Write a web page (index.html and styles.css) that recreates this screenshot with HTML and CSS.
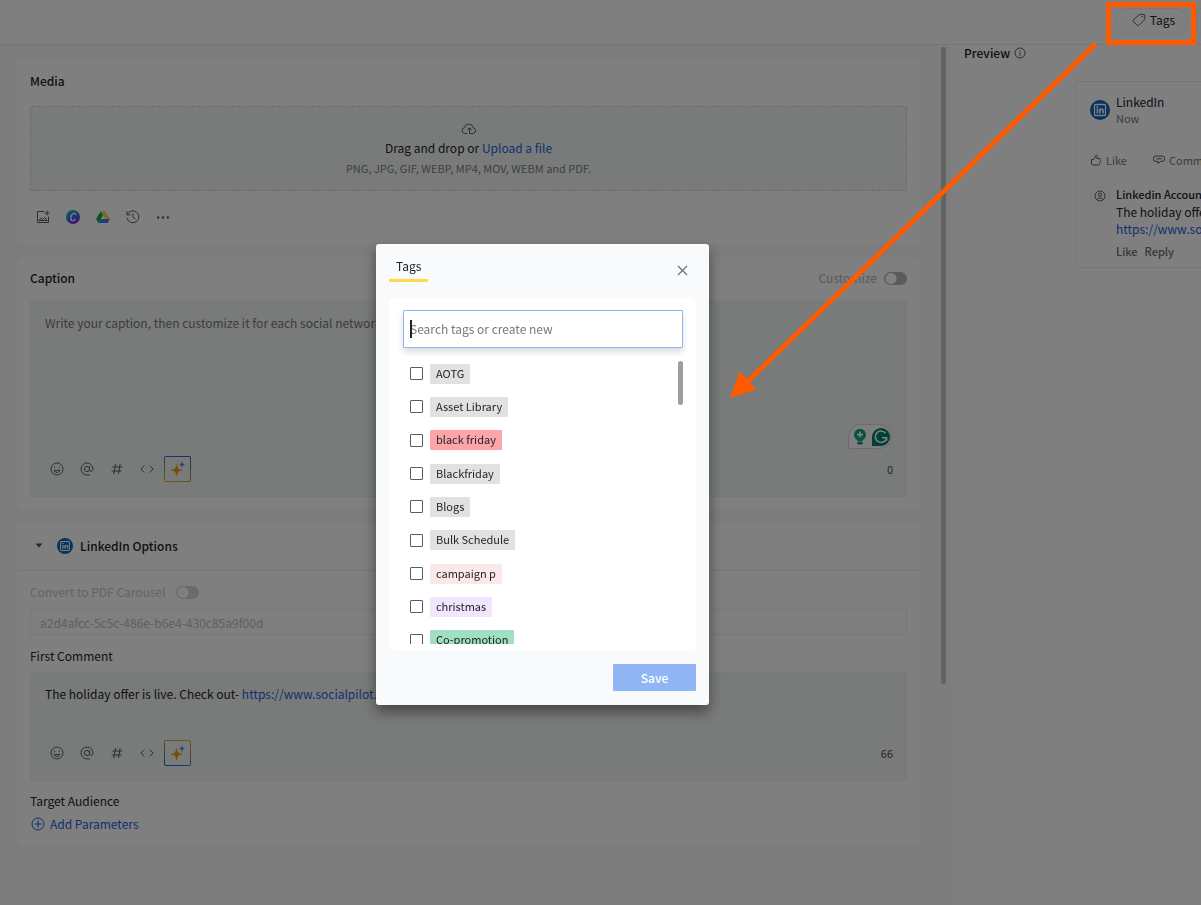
FILE: index.html
```html
<!DOCTYPE html>
<html lang="en">
<head>
<meta charset="UTF-8">
<title>Create Post</title>
<link rel="stylesheet" href="styles.css">
</head>
<body>
<!-- shared icons -->
<svg class="sprite" xmlns="http://www.w3.org/2000/svg">
	<symbol id="i-linkedin" viewBox="0 0 20 20">
		<circle cx="10" cy="10" r="10" fill="#0a66c2"/>
		<rect x="4.500" y="4.500" width="11" height="11" rx="1" fill="none" stroke="#fff" stroke-width="1.300"/>
		<path d="M7.400 8.600v4.900M10 8.600v4.900M10 11.200c0-2.600 3.200-2.800 3.200-.3v2.600" fill="none" stroke="#fff" stroke-width="1.600"/>
		<circle cx="7.400" cy="6.900" r="1" fill="#fff"/>
	</symbol>
	<symbol id="i-smile" viewBox="0 0 14 14">
		<circle cx="7" cy="7" r="6"/>
		<path d="M4 8.400c.8 2.600 5.200 2.600 6 0zM4.700 4.700v1.200M9.300 4.700v1.200"/>
	</symbol>
	<symbol id="i-at" viewBox="0 0 14 14">
		<circle cx="7" cy="7" r="2.600"/>
		<path d="M9.600 4.600V8c0 2.400 3.400 2 3.400-1a6 6 0 1 0-6 6h3"/>
	</symbol>
	<symbol id="i-hash" viewBox="0 0 14 14">
		<path d="M5.600 2 3.800 12M10.200 2 8.400 12M2.400 5h10M1.600 9h10"/>
	</symbol>
	<symbol id="i-code" viewBox="0 0 14 14">
		<path d="M4.300 3.600.9 7l3.400 3.400M9.700 3.600 13.100 7l-3.400 3.400"/>
	</symbol>
	<symbol id="i-spark" viewBox="0 0 16 16">
		<path d="M6.600 3.600C7.200 7.600 8 8.600 12 9.200 8 9.800 7.200 10.800 6.600 14.800 6 10.800 5.200 9.800 1.200 9.200 5.200 8.600 6 7.600 6.600 3.600z" fill="#ec9a0c" stroke="#ec9a0c" stroke-width=".8"/>
		<path d="M12 .8c.3 2 .8 2.500 2.600 2.800-1.800.3-2.300.8-2.600 2.800-.3-2-.8-2.500-2.600-2.800 1.800-.3 2.300-.8 2.600-2.800z" fill="#3d75d6" stroke="#3d75d6" stroke-width=".4"/>
	</symbol>
</svg>

<div class="app">
	<header class="topbar">
		<button class="pill" type="button">
			<svg class="line" width="14" height="14" viewBox="0 0 14 14"><path d="M7.600 1.400h4.200a1 1 0 0 1 1 1v4L6.800 12.400a1 1 0 0 1-1.400 0L1.200 8.400a1 1 0 0 1 0-1.400z"/><circle cx="10.400" cy="3.800" r=".4"/></svg>
			Tags
		</button>
		<button class="pill edge" type="button" aria-label="More actions"></button>
	</header>

	<main class="editor">
		<section class="card media">
			<h2>Media</h2>
			<div class="dropzone">
				<svg class="line" width="16" height="14" viewBox="0 0 16 14"><path d="M6 11.500H3.800a3 3 0 0 1-.4-5.900 4.500 4.500 0 0 1 8.800 0 3 3 0 0 1 0 5.900H8.500V6M6.300 8 8.500 5.800 10.700 8"/></svg>
				<p>Drag and drop or <a href="#">Upload a file</a></p>
				<p class="hint">PNG, JPG, GIF, WEBP, MP4, MOV, WEBM and PDF.</p>
			</div>
			<div class="tools">
				<button type="button" aria-label="Image library"><svg class="line" width="14" height="14" viewBox="0 0 14 14"><path d="M8 1.500H1.500v11h11V6.500M11 .5v5M8.500 3h5M3 10.500l2-2.500 1.500 1.700L8.700 7.500l2.500 3z"/></svg></button>
				<button type="button" aria-label="Canva"><svg width="14" height="14" viewBox="0 0 14 14"><defs><linearGradient id="canva" x1="0" y1="0" x2=".6" y2="1"><stop offset="0" stop-color="#00c4cc"/><stop offset=".5" stop-color="#2e7be0"/><stop offset="1" stop-color="#7d2ae8"/></linearGradient></defs><circle cx="7" cy="7" r="7" fill="url(#canva)"/><path d="M9.600 5.200c.4-2.400-1.500-2.700-3.100-1.200C4.700 5.700 4.200 9.500 5.900 10.500c1.200.6 2.800-.2 3.600-1.500" fill="none" stroke="#fff" stroke-width="1.300"/></svg></button>
				<button type="button" aria-label="Google Drive"><svg width="14" height="14" viewBox="0 0 14 14"><path d="M4.700 1.200 7 5.200 2.400 13 0 9z" fill="#11a55c"/><path d="M4.700 1.200h4.600L14 9H9.300z" fill="#ffcf48"/><path d="M4.700 9H14l-2.400 4H2.400z" fill="#3f7cf0"/></svg></button>
				<button type="button" aria-label="History"><svg class="line" width="14" height="14" viewBox="0 0 14 14"><path d="M1 1.200v3.600h3.600M1.200 4.800A6 6 0 1 1 1 8M7 3.500V7.200l2.500 2"/></svg></button>
				<button type="button" aria-label="More"><svg width="14" height="14" viewBox="0 0 14 14" fill="#5a5d63"><circle cx="2.200" cy="7.500" r="1.200"/><circle cx="7" cy="7.500" r="1.200"/><circle cx="11.800" cy="7.500" r="1.200"/></svg></button>
			</div>
		</section>

		<section class="card caption">
			<div class="row-between">
				<h2>Caption</h2>
				<label class="switch off">Customize <input type="checkbox"></label>
			</div>
			<div class="box">
				<p class="placeholder">Write your caption, then customize it for each social network</p>
				<div class="grammar">
					<svg width="14" height="18" viewBox="0 0 14 18"><circle cx="7" cy="6.800" r="6" fill="#12a383"/><path d="M4 10h6l-.6 3.500H4.600z" fill="#12a383"/><path d="M7 3.600v6M4 6.600h6" stroke="#fff" stroke-width="1.600"/><path d="M4 14.200h6v.8l-1 1.500H5l-1-1.500z" fill="#027e6f"/></svg>
					<svg width="18" height="18" viewBox="0 0 18 18"><path d="M9 0a9 9 0 1 1 0 18H0V9a9 9 0 0 1 9-9z" fill="#027e6f"/><path d="M13.500 5.200A5.700 5.700 0 1 0 14.600 9.800H10M14.600 9.400v3.400" fill="none" stroke="#fff" stroke-width="1.600"/></svg>
				</div>
				<div class="box-foot">
					<div class="tools">
						<button type="button" aria-label="Emoji"><svg class="line" width="14" height="14"><use href="#i-smile"/></svg></button>
						<button type="button" aria-label="Mention"><svg class="line" width="14" height="14"><use href="#i-at"/></svg></button>
						<button type="button" aria-label="Hashtag"><svg class="line" width="14" height="14"><use href="#i-hash"/></svg></button>
						<button type="button" aria-label="Code"><svg class="line" width="14" height="14"><use href="#i-code"/></svg></button>
						<button class="ai" type="button" aria-label="AI assistant"><svg width="16" height="16"><use href="#i-spark"/></svg></button>
					</div>
					<span class="count">0</span>
				</div>
			</div>
		</section>

		<section class="card options">
			<div class="options-head">
				<svg width="8" height="5" viewBox="0 0 8 5"><path d="M.5.500h7L4 4.500z" fill="#4a4d52"/></svg>
				<svg class="logo" width="16" height="16"><use href="#i-linkedin"/></svg>
				<h2>LinkedIn Options</h2>
			</div>
			<div class="options-body">
				<label class="switch disabled">Convert to PDF Carousel <input type="checkbox" disabled></label>
				<input class="doc" type="text" value="a2d4afcc-5c5c-486e-b6e4-430c85a9f00d" aria-label="Document title" disabled>
				<h3>First Comment</h3>
				<div class="box comment">
					<p>The holiday offer is live. Check out- <a href="#">https://www.socialpilot.co/</a></p>
					<div class="box-foot">
						<div class="tools">
							<button type="button" aria-label="Emoji"><svg class="line" width="14" height="14"><use href="#i-smile"/></svg></button>
							<button type="button" aria-label="Mention"><svg class="line" width="14" height="14"><use href="#i-at"/></svg></button>
							<button type="button" aria-label="Hashtag"><svg class="line" width="14" height="14"><use href="#i-hash"/></svg></button>
							<button type="button" aria-label="Code"><svg class="line" width="14" height="14"><use href="#i-code"/></svg></button>
							<button class="ai flip" type="button" aria-label="AI assistant"><svg width="16" height="16"><use href="#i-spark"/></svg></button>
						</div>
						<span class="count">66</span>
					</div>
				</div>
				<h3>Target Audience</h3>
				<a class="add" href="#"><svg width="14" height="14" viewBox="0 0 14 14" fill="none" stroke="currentColor"><circle cx="7" cy="7" r="6"/><path d="M7 3.500v7M3.500 7h7"/></svg>Add Parameters</a>
			</div>
		</section>
		<div class="page-thumb"></div>
	</main>

	<aside class="preview">
		<h2>Preview <svg class="line" width="12" height="12" viewBox="0 0 12 12"><circle cx="6" cy="6" r="5"/><path d="M6 5.300v3.400M6 3.200v1"/></svg></h2>
		<article class="post">
			<div class="post-head">
				<svg width="20" height="20"><use href="#i-linkedin"/></svg>
				<div>
					<p>LinkedIn</p>
					<p class="small">Now</p>
				</div>
			</div>
			<div class="post-actions">
				<span><svg class="line" width="12" height="12" viewBox="0 0 12 12"><path d="M1.500 5.500H3.500L5.200 3c0-2.500 2-2.500 2-.500L6.800 4.500H9.500c1 0 1 1 .7 1.500.5.800.3 1.200 0 1.700.3.700 0 1.200-.5 1.600 0 1-.5 1.700-1.500 1.700H2.500l-1-1z"/></svg>Like</span>
				<span><svg class="line" width="12" height="12" viewBox="0 0 12 12"><path d="M3 2h6a2.500 2.500 0 0 1 0 5.500H7.500L5 9.500v-2H3A2.700 2.700 0 0 1 3 2zM3.500 4.800h5"/></svg>Comment</span>
			</div>
			<div class="reply">
				<span class="avatar"><svg class="line" width="12" height="12" viewBox="0 0 12 12"><circle cx="6" cy="6" r="5"/><circle cx="6" cy="4.600" r="1.600"/><path d="M3 9.800c.4-2.600 5.600-2.600 6 0"/></svg></span>
				<div>
					<p class="name">Linkedin Account</p>
					<p>The holiday offer is live.</p>
					<p><a href="#">https://www.socialpilot.co/</a></p>
					<p class="links"><span>Like</span><span>Reply</span></p>
				</div>
			</div>
		</article>
	</aside>
</div>

<div class="overlay">
	<div class="modal" role="dialog" aria-label="Tags">
		<div class="modal-head">
			<span class="tab">Tags</span>
			<button class="close" type="button" aria-label="Close"><svg width="11" height="11" viewBox="0 0 11 11"><path d="M1 1l9 9M10 1l-9 9" stroke="#6a6d73" stroke-width="1.200"/></svg></button>
		</div>
		<div class="panel">
			<div class="search">
				<input type="text" placeholder="Search tags or create new" aria-label="Search tags">
				<span class="caret"></span>
			</div>
			<div class="list">
				<ul>
					<li><label><input type="checkbox"><span class="chip">AOTG</span></label></li>
					<li><label><input type="checkbox"><span class="chip">Asset Library</span></label></li>
					<li><label><input type="checkbox"><span class="chip red">black friday</span></label></li>
					<li><label><input type="checkbox"><span class="chip">Blackfriday</span></label></li>
					<li><label><input type="checkbox"><span class="chip">Blogs</span></label></li>
					<li><label><input type="checkbox"><span class="chip">Bulk Schedule</span></label></li>
					<li><label><input type="checkbox"><span class="chip pink">campaign p</span></label></li>
					<li><label><input type="checkbox"><span class="chip purple">christmas</span></label></li>
					<li><label><input type="checkbox"><span class="chip green">Co-promotion</span></label></li>
				</ul>
				<div class="list-thumb"></div>
			</div>
		</div>
		<div class="modal-foot">
			<button class="save" type="button">Save</button>
		</div>
	</div>
</div>

<!-- callout from the Tags button to the dialog -->
<svg class="callout" width="471" height="400" viewBox="730 0 471 400">
	<rect x="1108.500" y="4.500" width="85" height="38" fill="none" stroke="#ff5a00" stroke-width="5"/>
	<path d="M1094 45.500 746 383" stroke="#ff5a00" stroke-width="5" stroke-linecap="round"/>
	<path d="M730 398l9.500-26.500 17 18z" fill="#ff5a00"/>
</svg>
</body>
</html>
```
FILE: styles.css
```css
*{box-sizing: border-box;}
html,body{height: 100%;margin: 0;overflow: hidden;}
body{
	font-family: "Noto Sans CJK SC","Noto Sans",sans-serif;
	font-size: 12px;
	line-height: 16px;
	color: #212529;
	background-color: #fff;
}
h2,h3,p,ul{margin: 0;padding: 0;}
h2{font-size: 12px;font-weight: 500;}
h3{font-size: 12px;font-weight: 400;}
a{color: #1f5fe0;text-decoration: none;}
button,input{font: inherit;color: inherit;}
button{padding: 0;border: 0;background: none;}
svg{display: block;flex: none;}
.sprite{position: absolute;width: 0;height: 0;}
.line{fill: none;stroke: #5a5d63;stroke-width: 1;}

/* page */
.app{
	display: grid;
	grid-template-columns: 1fr 251px;
	grid-template-rows: 45px 1fr;
	height: 100%;
}
.topbar{
	grid-column: 1 / 3;
	display: flex;
	justify-content: flex-end;
	gap: 8px;
	padding: 8px 0 10px;
	border-bottom: 1px solid #ececee;
}
.pill{
	display: flex;
	align-items: center;
	justify-content: center;
	gap: 4px;
	width: 73px;
	height: 26px;
	padding: 0 0 2px 4px;
	border: 1px solid #f0f0f2;
	border-radius: 13px;
}
.edge{
	width: 5px;
	padding: 0;
	border-right: 0;
	border-radius: 13px 0 0 13px;
}
.editor{
	position: relative;
	display: flex;
	flex-direction: column;
	gap: 13px;
	padding: 14px 29px 0 17px;
	background-color: #f8f8fa;
}
.page-thumb{
	position: absolute;
	top: 2px;
	right: 4px;
	width: 5px;
	height: 637px;
	border-radius: 3px;
	background-color: #c4c4c4;
}
.card{border-radius: 6px;background-color: #fff;}
.media{padding: 14px 14px 14px 13px;}
.dropzone{
	display: flex;
	flex-direction: column;
	align-items: center;
	gap: 4px;
	height: 85px;
	margin-top: 17px;
	padding-top: 15px;
	border: 1px dashed #d2d5d4;
	border-radius: 2px;
	background-color: #f3f7f5;
}
.hint{font-size: 11px;color: #7b7e83;}
.tools{display: flex;align-items: center;}
.tools button{
	display: flex;
	align-items: center;
	justify-content: center;
	width: 26px;
	height: 26px;
	margin-right: 4px;
}
.media .tools{margin-top: 13px;}
.caption{padding: 13px 14px 13px 13px;}
.row-between{
	display: flex;
	align-items: center;
	justify-content: space-between;
}
.switch{display: flex;align-items: center;}
.switch input{
	appearance: none;
	width: 23px;
	height: 13px;
	margin: 0 0 0 7px;
	border-radius: 7px;
	background: radial-gradient(circle at 7px 50%,#fff 5px,transparent 6px) #b5b5b5;
}
.off{color: #b2b4b8;}
.disabled{color: #c8c8cb;}
.disabled input{margin-left: 10px;background-color: #d5d6d9;}
.box{
	display: flex;
	flex-direction: column;
	height: 196px;
	margin-top: 15px;
	padding: 13px 13px 14px;
	border: 1px solid #eef1f0;
	border-radius: 2px;
	background-color: #f3f7f5;
}
.box p{padding-left: 1px;}
.placeholder{color: #75787d;}
.box-foot{
	display: flex;
	align-items: center;
	justify-content: space-between;
}
.grammar{
	display: flex;
	align-items: center;
	gap: 5px;
	align-self: flex-end;
	width: 44px;
	height: 25px;
	margin: auto 1px 7px 0;
	padding-left: 4px;
	border: 1px solid #d5d5e0;
	border-radius: 13px 13px 13px 0;
	background-color: #fff;
}
.count{font-size: 11px;color: #4a4d52;}
.tools .ai{
	width: 27px;
	border: 1px solid transparent;
	border-radius: 2px;
	background:
		linear-gradient(#f3f7f5,#f3f7f5) padding-box,
		linear-gradient(195deg,#1d5ee8,#e8b91c) border-box;
}
.tools .flip{
	background:
		linear-gradient(#f3f7f5,#f3f7f5) padding-box,
		linear-gradient(195deg,#e8b91c,#1d5ee8) border-box;
}
.options-head{
	display: flex;
	align-items: center;
	height: 48px;
	padding: 0 0 2px 18px;
	border-bottom: 1px solid #ececee;
}
.logo{margin: 0 7px 0 14px;}
.options-body{padding: 13px 14px 14px 13px;}
.doc{
	width: 100%;
	height: 26px;
	margin: 9px 0 13px;
	padding: 0 9px;
	border: 1px solid #efeff1;
	background-color: #fff;
	color: #c0c0c4;
	display: block;
}
.comment{height: 109px;margin: 8px 0 12px;justify-content: space-between;}
.add{display: flex;align-items: center;gap: 5px;margin-top: 7px;padding-left: 1px;}

.preview{border-left: 1px solid #f6f6f7;overflow: hidden;}
.preview h2{display: flex;align-items: center;gap: 4px;padding: 0 13px 0;}
.post{
	margin: 20px 0 0 124px;
	padding: 12px 0 7px 14px;
	border: 1px solid #ececee;
	border-right: 0;
	border-radius: 5px 0 0 5px;
	white-space: nowrap;
}
.post-head{display: flex;align-items: center;gap: 6px;}
.small{font-size: 11px;color: #75787d;}
.post-actions{
	display: flex;
	gap: 26px;
	margin-top: 26px;
	font-size: 11px;
	color: #75787d;
}
.post-actions span{display: flex;align-items: center;gap: 4px;}
.reply{display: flex;gap: 6px;margin-top: 18px;line-height: 17px;}
.avatar{
	flex: none;
	display: flex;
	align-items: center;
	justify-content: center;
	width: 20px;
	height: 20px;
	border: 1px solid #f0f0f2;
	border-radius: 50%;
}
.name{font-size: 11px;font-weight: 500;}
.links{display: flex;gap: 7px;margin-top: 6px;font-size: 11px;font-weight: 500;color: #6c6f74;}

/* dialog */
.overlay{
	position: fixed;
	inset: 0;
	padding: 244px 0 0 376px;
	background-color: rgba(0,0,0,.5);
}
.modal{
	width: 333px;
	padding: 13px 13px 14px;
	border-radius: 3px;
	background-color: #f8fafc;
	box-shadow: 0 7px 14px rgba(0,0,0,.45);
}
.modal-head{
	display: flex;
	align-items: flex-start;
	justify-content: space-between;
	height: 40px;
}
.tab{
	padding: 1px 7px 5px;
	border-bottom: 3px solid #ffd84d;
}
.close{padding: 8px;}
.panel{
	padding: 13px 13px 7px 14px;
	border-radius: 6px;
	background-color: #fff;
}
.search{position: relative;margin-bottom: 9px;}
.search input{
	display: block;
	width: 100%;
	height: 38px;
	padding: 0 6px 1px;
	border: 1px solid #8db5f4;
	border-radius: 1px;
	box-shadow: 0 4px 6px rgba(0,0,0,.14);
	outline: none;
}
.search input::placeholder{color: #75787d;opacity: 1;}
.caret{
	position: absolute;
	left: 7px;
	top: 10px;
	width: 2px;
	height: 18px;
	background-color: #212529;
}
.list{position: relative;height: 287px;overflow: hidden;}
.list ul{
	display: grid;
	grid-template-rows: repeat(9,1fr);
	height: 300px;
	padding-left: 7px;
	list-style: none;
}
.list label{display: flex;align-items: center;gap: 7px;height: 100%;}
.list input{
	appearance: none;
	width: 13px;
	height: 13px;
	margin: 0;
	border: 1px solid #5a5d63;
	border-radius: 1px;
}
.chip{
	height: 20px;
	padding: 0 6px;
	border-radius: 1px;
	font-size: 11px;
	line-height: 19px;
	background-color: #e1e1e1;
}
.red{background-color: #fda5a8;}
.pink{background-color: #fde8e9;}
.purple{background-color: #f2e6ff;}
.green{background-color: #a0dfc0;}
.list-thumb{
	position: absolute;
	top: 4px;
	right: 0;
	width: 5px;
	height: 44px;
	border-radius: 3px;
	background-color: #9e9e9e;
}
.modal-foot{display: flex;justify-content: flex-end;margin-top: 13px;}
.save{
	width: 83px;
	height: 27px;
	border-radius: 1px;
	background-color: #8fb5f5;
	color: #fff;
	font-weight: 500;
}
.callout{position: absolute;top: 0;right: 0;}
```
